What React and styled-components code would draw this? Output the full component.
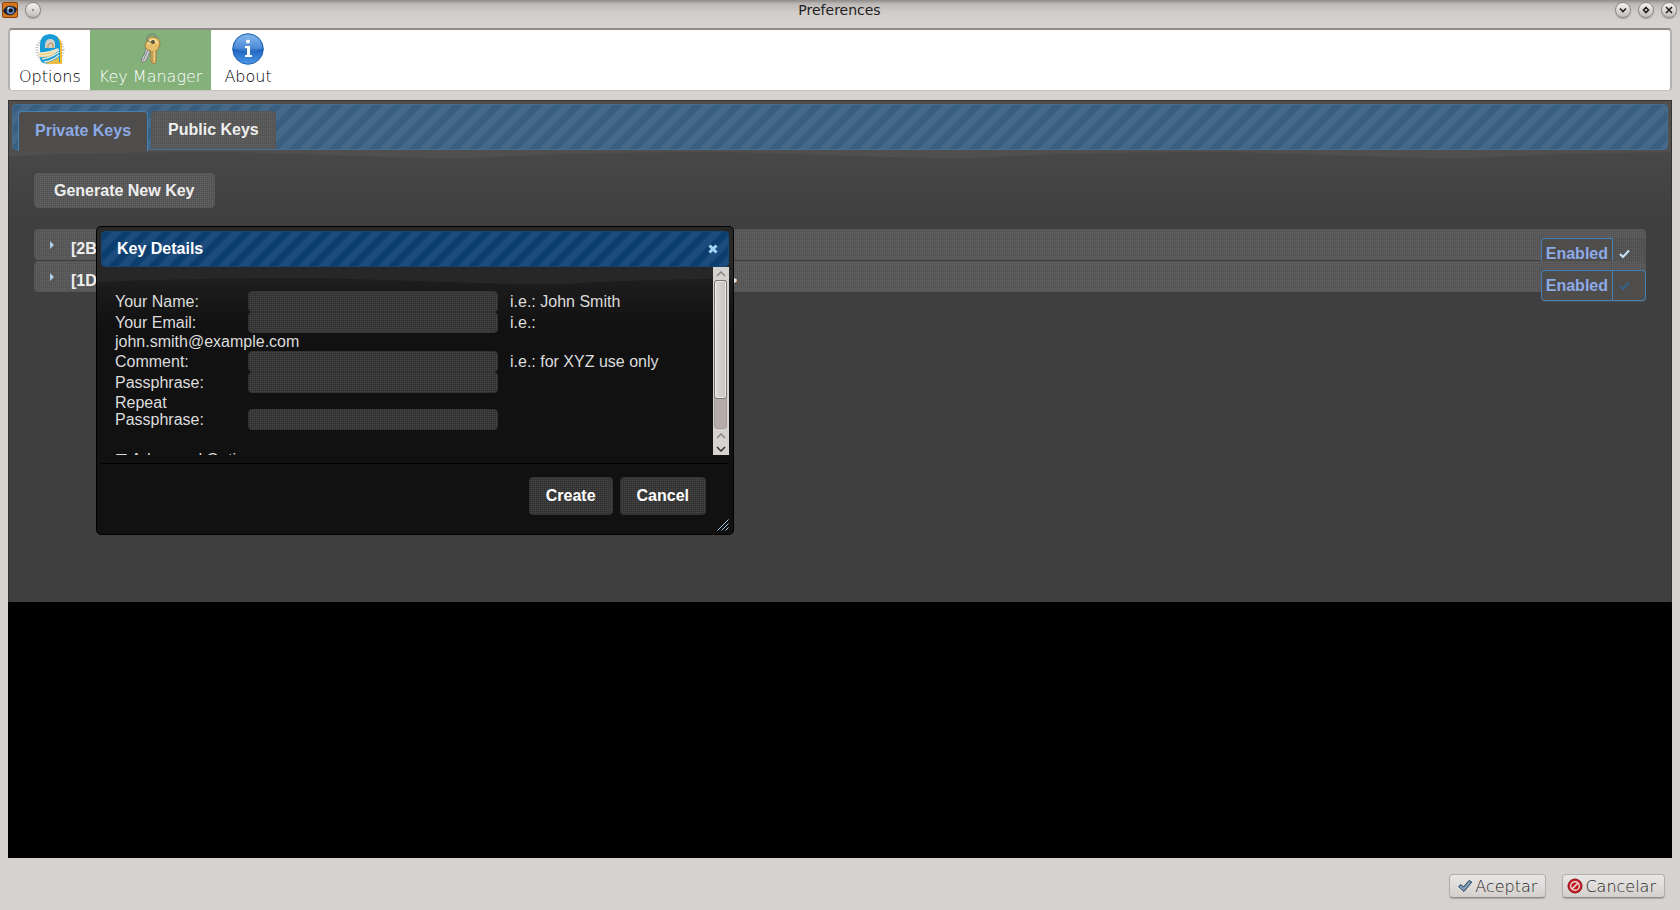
import { useState } from "react";
import styled, { createGlobalStyle } from "styled-components";

const GlobalStyle = createGlobalStyle`
  * {
    box-sizing: border-box;
  }
  body {
    margin: 0;
    background: #d6d2cf;
    font-family: "Liberation Sans", Arial, sans-serif;
    font-size: 16px;
  }
  button, input {
    font-family: inherit;
    font-size: inherit;
    margin: 0;
    padding: 0;
  }
`;

// textures shared by the dark theme
const wave = (fill) =>
  `url("data:image/svg+xml,%3Csvg xmlns='http://www.w3.org/2000/svg' width='500' height='60'%3E%3Cpath d='M0 0V55C70 52 130 51 200 51S380 57 430 57S480 56 500 55V0Z' fill='%23${fill}'/%3E%3C/svg%3E")`;

const stripes = (dark, light) =>
  `linear-gradient(135deg, ${dark} 23%, ${light} 27%, ${light} 48%, ${dark} 52%, ${dark} 73%, ${light} 77%, ${light} 98%, ${dark} 100%) 0 0 / 20px 20px`;

const dots = (color) =>
  `conic-gradient(${color} 25%, transparent 0) 0 0 / 2px 2px`;

const Window = styled.div`
  display: flex;
  flex-direction: column;
  min-height: 100vh;
  background: linear-gradient(#8f8b89 0, #bdb9b6 4px, #d0ccc9 12px, #d6d2cf 24px);
`;

const TitleBar = styled.header`
  display: grid;
  grid-template-columns: 1fr auto 1fr;
  align-items: center;
  height: 20px;
  margin-bottom: 8px;
  padding: 0 3px 0 2px;
  font-family: "DejaVu Sans", sans-serif;
`;

const TitleGroup = styled.div`
  display: flex;
  align-items: center;
  gap: 7px;
  justify-content: ${(props) => (props.$end ? "flex-end" : "flex-start")};
`;

const WindowTitle = styled.h1`
  margin: 0;
  font-size: 14px;
  line-height: 20px;
  font-weight: 400;
  color: #222;
`;

const WindowButton = styled.button`
  display: flex;
  width: 16px;
  height: 16px;
  border: 1px solid #8d8986;
  border-radius: 50%;
  background: linear-gradient(#f4f2f1, #c2bebb);
  box-shadow: 0 1px 1px #a19d9a;

  svg {
    width: 14px;
    height: 14px;
  }
`;

const Toolbar = styled.nav`
  display: flex;
  height: 63px;
  margin: 0 8px 9px;
  border: 2px solid #b5b1ae;
  border-top-color: #8f8b89;
  border-bottom: 1px solid #c6c2bf;
  border-radius: 4px;
  background: #fff;
`;

const ToolButton = styled.button`
  display: flex;
  flex-direction: column;
  align-items: center;
  padding: 3px 9px 0;
  border: none;
  background: ${(props) => (props.$active ? "#84b079" : "none")};
  color: ${(props) => (props.$active ? "#fff" : "#000")};
  font-family: "DejaVu Sans Light", "DejaVu Sans", sans-serif;
  font-weight: 200;
  line-height: 24px;

  & + & + & {
    padding: 3px 13px 0;
  }
`;

const View = styled.main`
  flex: 1;
  margin: 0 8px;
  background: #000;
`;

const Panel = styled.section`
  position: relative;
  min-height: 502px;
  padding: 3px;
  border: 1px solid #333;
  border-bottom: none;
  background: ${wave("504f4d")} 0 0 repeat-x,
    linear-gradient(#484848 50px, #3f3f3f 120px);
`;

const TabBar = styled.div`
  display: flex;
  align-items: flex-end;
  gap: 3px;
  height: 46px;
  padding: 0 5px;
  border: 1px solid #456d90;
  border-radius: 4px;
  background: ${stripes("#385f80", "#46698a")};
`;

const Tab = styled.button`
  height: ${(props) => (props.$active ? 40 : 38)}px;
  margin-bottom: ${(props) => (props.$active ? -2 : 0)}px;
  padding: 0 16px 2px;
  border: 1px solid ${(props) => (props.$active ? "#4481b6" : "#565656")};
  border-bottom: none;
  border-radius: 4px 4px 0 0;
  background: ${(props) =>
    props.$active ? "#4e4d4c" : `${dots("#646464")} #555`};
  color: ${(props) => (props.$active ? "#8caae6" : "#eee")};
  font-weight: 700;
`;

const TabBody = styled.div`
  padding: 23px 22px;
`;

const DarkButton = styled.button`
  height: ${(props) => (props.$small ? 38 : 35)}px;
  padding: 0 ${(props) => (props.$small ? 16 : 19)}px;
  border: 1px solid ${(props) => (props.$small ? "#333" : "#585858")};
  border-radius: 4px;
  background: ${(props) =>
    props.$small ? `${dots("#4a4a4a")} #333` : `${dots("#666")} #555`};
  color: ${(props) => (props.$small ? "#fff" : "#eee")};
  font-weight: 700;
`;

const KeyList = styled.div`
  display: flex;
  flex-direction: column;
  gap: 1px;
  margin-top: 21px;
`;

const KeyRow = styled.div`
  display: flex;
  align-items: flex-start;
  height: 31px;
  border: 1px solid #555;
  border-radius: 4px;
  background: ${dots("#646464")} #555;
`;

const KeyHeading = styled.button`
  display: flex;
  align-items: center;
  flex: 1;
  height: 29px;
  padding-left: 14px;
  border: none;
  background: none;
  color: #eee;
  font-weight: 700;
`;

const KeyText = styled.span`
  display: flex;
  justify-content: space-between;
  width: 666px;
  margin-left: 16px;
  padding-top: 8px;
`;

const Toggle = styled.label`
  display: flex;
  height: 32px;
  margin-top: 8px;
  margin-right: -1px;
  border-radius: 4px;
  background: ${(props) =>
    props.$on ? "#4e4d4c" : `${dots("#5e5e5e")} #505050`};
  color: #8caae6;
  font-weight: 700;
  line-height: 29px;
`;

const ToggleText = styled.span`
  height: 31px;
  padding: 0 4px;
  border: 1px solid #4481b6;
  border-radius: 4px 0 0 4px;
  background: #4e4d4c;
`;

const ToggleMark = styled.span`
  display: flex;
  align-items: center;
  justify-content: center;
  width: 33px;
  height: 31px;
  padding-right: 8px;
  border: 1px solid ${(props) => (props.$on ? "#4481b6" : "transparent")};
  border-left: none;
  border-radius: 0 4px 4px 0;
`;

const HiddenCheck = styled.input`
  position: absolute;
  opacity: 0;
`;

const Dialog = styled.section`
  position: absolute;
  top: 125px;
  left: 87px;
  width: 638px;
  padding: 4px;
  border: 1px solid #000;
  border-radius: 5px;
  background: ${wave("272727")} 0 0 repeat-x,
    linear-gradient(#1e1e1e 50px, #111 100px) #111;
  color: #ddd;
`;

const DialogTitle = styled.div`
  display: flex;
  align-items: center;
  justify-content: space-between;
  height: 36px;
  padding: 0 10px 0 15px;
  border: 1px solid #14466f;
  border-radius: 4px;
  background: ${stripes("#0b3e6f", "#1c4b7e")};
`;

const DialogHeading = styled.h2`
  margin: 0;
  color: #fff;
  font-size: 16px;
  line-height: 20px;
`;

const CloseButton = styled.button`
  display: flex;
  padding: 0;
  border: none;
  background: none;
`;

const DialogBody = styled.div`
  display: flex;
  height: 188px;
  overflow: hidden;
`;

const Form = styled.form`
  flex: 1;
  padding: 24px 14px 0;
`;

const Field = styled.div`
  display: flex;
  flex-wrap: wrap;
  align-items: flex-end;
`;

const FieldLabel = styled.label`
  width: 133px;
  padding: ${(props) => (props.$tall ? "1px 50px 2px 0" : "0")};
  line-height: ${(props) => (props.$tall ? 17 : 21)}px;
`;

const TextInput = styled.input`
  width: 250px;
  height: 21px;
  padding: 0 4px;
  border: 1px solid #333;
  border-radius: 4px;
  background: ${dots("#4a4a4a")} #333;
  color: #eee;
`;

const Hint = styled.span`
  margin-left: 12px;
  line-height: 21px;
`;

const HintLine = styled.span`
  flex-basis: 100%;
  line-height: 18px;
`;

const Advanced = styled.button`
  display: flex;
  gap: 3px;
  margin-top: 20px;
  border: none;
  background: none;
  color: #ddd;
  line-height: 20px;
`;

const Scrollbar = styled.div`
  display: flex;
  flex-direction: column;
  width: 16px;
  background: #d6d2cf;
`;

const ScrollButton = styled.button`
  display: flex;
  justify-content: center;
  align-items: center;
  height: 13px;
  border: none;
  background: none;
`;

const ScrollTrack = styled.div`
  flex: 1;
  margin: 0 2px 0 1px;
  border: 1px solid #a39e9b;
  border-radius: 3px;
  background: #b5acaa;
`;

const ScrollThumb = styled.div`
  height: 119px;
  margin: -1px;
  border: 1px solid #77736f;
  border-radius: 3px;
  background: linear-gradient(90deg, #dedcda, #c5c2c0);
  box-shadow: inset 0 0 0 1px #eeecea;
`;

const DialogButtons = styled.div`
  position: relative;
  display: flex;
  justify-content: flex-end;
  gap: 7px;
  margin-top: 8px;
  padding: 13px 23px 15px;
  border-top: 1px solid #000;
`;

const ResizeGrip = styled.svg`
  position: absolute;
  right: 0;
  bottom: -1px;
`;

const Footer = styled.footer`
  display: flex;
  justify-content: flex-end;
  gap: 16px;
  padding: 16px 15px 12px;
`;

const FooterButton = styled.button`
  display: flex;
  align-items: center;
  gap: 2px;
  height: 24px;
  padding: 0 8px 0 ${(props) => props.$inset}px;
  border: 1px solid #b4b0ad;
  border-bottom-color: #8f8b88;
  border-radius: 4px;
  background: linear-gradient(#e9e7e6, #d3d0cd);
  box-shadow: 0 1px 1px #aeaaa7;
  color: #222;
  font-family: "DejaVu Sans Light", "DejaVu Sans", sans-serif;
  font-weight: 200;
`;

const AppIcon = () => (
  <svg width="16" height="16" viewBox="0 0 16 16">
    <rect x="0.5" y="0.5" width="15" height="15" rx="1.5" fill="#d8761c" stroke="#8a4310" />
    <path d="M1 9C3 3 11 2 15 7C13 14 5 16 1 9Z" fill="#16202f" />
    <circle cx="8.5" cy="8.5" r="3.8" fill="#6d8db5" />
    <circle cx="8.8" cy="8.5" r="2" fill="#0b1019" />
    <path d="M5 6l3-1.5-1.5 3z" fill="#dbe8f5" />
  </svg>
);

const OptionsIcon = () => (
  <svg width="32" height="32" viewBox="0 0 32 32">
    <circle cx="16" cy="17" r="13" fill="none" stroke="#b9b9b9" strokeWidth="3" strokeDasharray="1 1.5" />
    <path d="M8 20V10Q8 2 17 2Q28 3 28 13V30L22 31V13Q21 8 17 8Q13 8 13 13V20Z" fill="#f0bc35" />
    <path d="M6 20V11Q7 1 16 1Q25 1 26 11V29Q17 32 9 30Q6 28 6 24Z" fill="#159bd7" />
    <path d="M11 15V11Q12 6 16 6Q21 6 21 11V15Z" fill="#d3d0ca" />
    <path d="M14 15v-3l2-2 3 1v4" fill="none" stroke="#b98f47" />
    <path d="M5 20C13 20 19 18 25 15C21 23 14 25 6 24Z" fill="#f3d071" />
    <path d="M6 20C14 20 19 18 24 16M6 23C15 23 20 20 25 17M8 26C17 25 21 22 25 19M10 29C18 28 22 25 25 22" fill="none" stroke="#eee9d7" strokeWidth="1.4" />
    <path d="M11 30Q20 28 25 24V29H28V31H15Z" fill="#eabd45" />
  </svg>
);

const KeysIcon = () => (
  <svg width="32" height="32" viewBox="0 0 32 32">
    <path d="M12 7C11 2 18-1 21 3C23 5 22 8 20 9" fill="none" stroke="#78917a" strokeWidth="1.5" />
    <path d="M12 12l4 3-1 4-4 9-3 2-2-3 1-1 0-2 2-2z" fill="#c9cbcc" stroke="#6f7370" strokeWidth="0.8" />
    <path d="M13 17L8 28" stroke="#868b8b" />
    <path d="M12 8Q14 3 19 4Q25 5 25 11Q24 16 21 18V29L19 31L16 29V18Q10 17 10 12Z" fill="#e6bd69" stroke="#936c34" strokeWidth="0.8" />
    <path d="M13 9Q15 5 20 6Q23 8 23 11Q18 8 13 12Z" fill="#f7dfa1" />
    <circle cx="18" cy="9" r="2" fill="#5c5638" />
    <path d="M18 18v11" stroke="#a57535" />
    <path d="M19 19v9" stroke="#f7dc99" />
    <path d="M12 7Q14 10 18 9" fill="none" stroke="#565d4e" />
  </svg>
);

const AboutIcon = () => (
  <svg width="32" height="32" viewBox="0 0 32 32">
    <defs>
      <linearGradient id="aboutFill" x1="0" y1="0" x2="0" y2="1">
        <stop offset="0" stopColor="#77b0ec" />
        <stop offset="0.48" stopColor="#2e77cf" />
        <stop offset="0.5" stopColor="#1d62bd" />
        <stop offset="1" stopColor="#4c99e8" />
      </linearGradient>
    </defs>
    <circle cx="16" cy="16" r="15.3" fill="url(#aboutFill)" stroke="#2861ad" />
    <path d="M2 16C2-2 30-2 30 16Q16 20 2 16Z" fill="#fff" opacity="0.14" />
    <circle cx="16" cy="8.5" r="2" fill="#fff" />
    <path d="M13 13h5v9h2v2h-7v-2h2v-7h-2z" fill="#fff" />
  </svg>
);

const AcceptIcon = () => (
  <svg width="16" height="16" viewBox="0 0 16 16">
    <path d="M1.5 8.5L4 6.5L6.5 9L12 2.5L14.8 4L7 13.5Z" fill="#6e8eab" stroke="#2b465f" strokeLinejoin="round" />
    <path d="M3 8.5l3.5 3L13 4" fill="none" stroke="#9bb4ca" />
  </svg>
);

const RejectIcon = () => (
  <svg width="16" height="16" viewBox="0 0 16 16">
    <circle cx="8" cy="8" r="7" fill="#c81f25" stroke="#8b1216" />
    <circle cx="8" cy="8" r="4.3" fill="#ba161b" stroke="#f0d8d6" strokeWidth="1.4" />
    <path d="M5 11L11 5" stroke="#f0d8d6" strokeWidth="1.7" />
  </svg>
);

const Chevron = ({ down, color }) => (
  <svg width="10" height="6" viewBox="0 0 10 6">
    <path d={down ? "M1 1l4 4 4-4" : "M1 5l4-4 4 4"} fill="none" stroke={color} strokeWidth="1.5" />
  </svg>
);

const keys = [
  { id: "2B", start: "[2B", end: "", on: false },
  { id: "1D", start: "[1D", end: ">", on: true },
];

const KeyEntry = ({ entry }) => {
  const [on, setOn] = useState(entry.on);

  return (
    <KeyRow>
      <KeyHeading type="button">
        <svg width="6" height="10" viewBox="0 0 6 10">
          <path d="M1 1l4 4-4 4z" fill="#b0cfe8" />
        </svg>
        <KeyText>
          <span>{entry.start}</span>
          <span>{entry.end}</span>
        </KeyText>
      </KeyHeading>
      <Toggle $on={on}>
        <HiddenCheck type="checkbox" checked={on} onChange={() => setOn(!on)} />
        <ToggleText>Enabled</ToggleText>
        <ToggleMark $on={on}>
          <svg width="12" height="10" viewBox="0 0 12 10">
            <path d="M1 5l3 3 6-6.5" fill="none" stroke={on ? "#37628a" : "#c4dff2"} strokeWidth="2.2" />
          </svg>
        </ToggleMark>
      </Toggle>
    </KeyRow>
  );
};

const KeyDialog = () => (
  <Dialog role="dialog" aria-labelledby="dialogTitle">
    <DialogTitle>
      <DialogHeading id="dialogTitle">Key Details</DialogHeading>
      <CloseButton type="button" aria-label="Close">
        <svg width="10" height="10" viewBox="0 0 10 10">
          <path d="M1.5 1.5l7 7M8.5 1.5l-7 7" stroke="#a3d4f7" strokeWidth="3" />
        </svg>
      </CloseButton>
    </DialogTitle>
    <DialogBody>
      <Form>
        <Field>
          <FieldLabel htmlFor="name">Your Name:</FieldLabel>
          <TextInput id="name" type="text" />
          <Hint>i.e.: John Smith</Hint>
        </Field>
        <Field>
          <FieldLabel htmlFor="email">Your Email:</FieldLabel>
          <TextInput id="email" type="text" />
          <Hint>i.e.:</Hint>
          <HintLine>john.smith@example.com</HintLine>
        </Field>
        <Field>
          <FieldLabel htmlFor="comment">Comment:</FieldLabel>
          <TextInput id="comment" type="text" />
          <Hint>i.e.: for XYZ use only</Hint>
        </Field>
        <Field>
          <FieldLabel htmlFor="pass">Passphrase:</FieldLabel>
          <TextInput id="pass" type="password" />
        </Field>
        <Field>
          <FieldLabel htmlFor="repeat" $tall>
            Repeat
            <br />
            Passphrase:
          </FieldLabel>
          <TextInput id="repeat" type="password" />
        </Field>
        <Advanced type="button">
          <svg width="13" height="20" viewBox="0 0 13 20">
            <path d="M1 4h11L6.5 14z" fill="#ddd" />
          </svg>
          Advanced Options
        </Advanced>
      </Form>
      <Scrollbar>
        <ScrollButton type="button" aria-label="Scroll up">
          <Chevron color="#8a8683" />
        </ScrollButton>
        <ScrollTrack>
          <ScrollThumb />
        </ScrollTrack>
        <ScrollButton type="button" aria-label="Scroll up">
          <Chevron color="#8a8683" />
        </ScrollButton>
        <ScrollButton type="button" aria-label="Scroll down">
          <Chevron down color="#333" />
        </ScrollButton>
      </Scrollbar>
    </DialogBody>
    <DialogButtons>
      <DarkButton type="button" $small>Create</DarkButton>
      <DarkButton type="button" $small>Cancel</DarkButton>
      <ResizeGrip width="12" height="12" viewBox="0 0 12 12">
        <path d="M0.5 11.5l11-11M4.5 11.5l7-7M8.5 11.5l3-3" stroke="#a3c9e8" />
      </ResizeGrip>
    </DialogButtons>
  </Dialog>
);

const App = () => {
  return (
    <Window>
      <GlobalStyle />
      <TitleBar>
        <TitleGroup>
          <AppIcon />
          <WindowButton type="button" aria-label="Stick">
            <svg viewBox="0 0 14 14">
              <circle cx="7" cy="7" r="1" fill="#777" />
            </svg>
          </WindowButton>
        </TitleGroup>
        <WindowTitle>Preferences</WindowTitle>
        <TitleGroup $end>
          <WindowButton type="button" aria-label="Minimize">
            <svg viewBox="0 0 14 14">
              <path d="M4 5.5l3 3 3-3" fill="none" stroke="#222" strokeWidth="1.6" />
            </svg>
          </WindowButton>
          <WindowButton type="button" aria-label="Maximize">
            <svg viewBox="0 0 14 14">
              <path d="M7 4.5L9.5 7 7 9.5 4.5 7z" fill="none" stroke="#222" strokeWidth="1.6" />
            </svg>
          </WindowButton>
          <WindowButton type="button" aria-label="Close window">
            <svg viewBox="0 0 14 14">
              <path d="M4 4l6 6M10 4l-6 6" stroke="#222" strokeWidth="1.6" />
            </svg>
          </WindowButton>
        </TitleGroup>
      </TitleBar>

      <Toolbar>
        <ToolButton type="button">
          <OptionsIcon />
          Options
        </ToolButton>
        <ToolButton type="button" $active>
          <KeysIcon />
          Key Manager
        </ToolButton>
        <ToolButton type="button">
          <AboutIcon />
          About
        </ToolButton>
      </Toolbar>

      <View>
        <Panel>
          <TabBar role="tablist">
            <Tab type="button" role="tab" aria-selected="true" $active>Private Keys</Tab>
            <Tab type="button" role="tab" aria-selected="false">Public Keys</Tab>
          </TabBar>
          <TabBody>
            <DarkButton type="button">Generate New Key</DarkButton>
            <KeyList>
              {keys.map((entry) => (
                <KeyEntry key={entry.id} entry={entry} />
              ))}
            </KeyList>
          </TabBody>
          <KeyDialog />
        </Panel>
      </View>

      <Footer>
        <FooterButton type="button" $inset={7}>
          <AcceptIcon />
          Aceptar
        </FooterButton>
        <FooterButton type="button" $inset={4}>
          <RejectIcon />
          Cancelar
        </FooterButton>
      </Footer>
    </Window>
  );
};

export default App;
